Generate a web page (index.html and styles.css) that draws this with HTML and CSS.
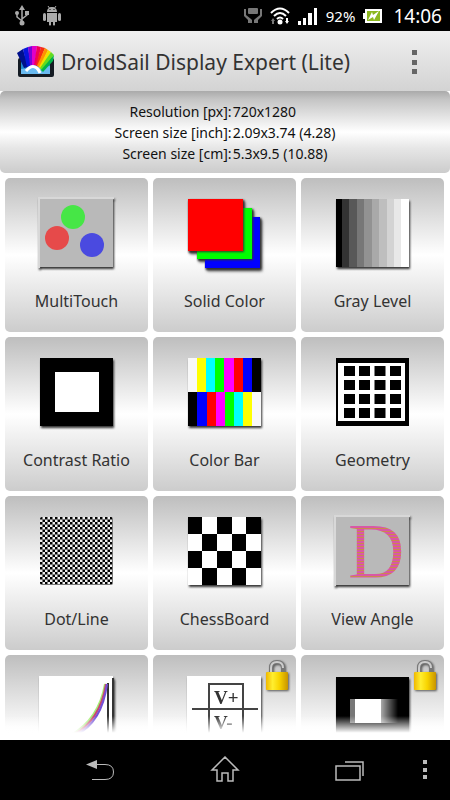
FILE: index.html
```
<!DOCTYPE html>
<html lang="en">
<head>
    <meta charset="UTF-8">
    <meta name="viewport" content="width=device-width, initial-scale=1">
    <title>DroidSail Display Expert (Lite)</title>
    <link rel="stylesheet" href="styles.css">
</head>
<body>
    <div class="status">
        <div class="status-left">
            <svg width="14" height="22" viewBox="0 0 14 22" fill="none" stroke="#aaa" stroke-width="1.5">
                <path d="M7 4V17M2 9V12L7 16M12 8V10L7 14"/>
                <path d="M7 0L10 5H4ZM10 6H14V10H10Z" fill="#aaa" stroke="none"/>
                <circle cx="2" cy="8" r="2" fill="#aaa" stroke="none"/>
                <circle cx="7" cy="18" r="2.5" fill="#aaa" stroke="none"/>
            </svg>
            <svg width="18" height="22" viewBox="0 0 18 22" fill="#aaa">
                <path d="M4 7C4 4 6 2 9 2S14 4 14 7ZM4 8H14V17H12V20Q11 21 10 20V17H8V20Q7 21 6 20V17H4Z"/>
                <rect x="0" y="8" width="3" height="8" rx="1.5"/>
                <rect x="15" y="8" width="3" height="8" rx="1.5"/>
                <path d="M5 1L7 4M13 1L11 4" stroke="#aaa"/>
                <path d="M6.500 4H7.500V5H6.500ZM10.500 4H11.500V5H10.500Z" fill="#000"/>
            </svg>
        </div>
        <div class="status-right">
            <svg width="18" height="18" viewBox="0 0 18 18" fill="#777">
                <rect x="4" y="1" width="10" height="6" rx="1"/>
                <path d="M0 2H2V8L7 12L8 13V16H4V13L0 9ZM18 2H16V8L11 12L10 13V16H14V13L18 9Z"/>
            </svg>
            <svg width="20" height="18" viewBox="0 0 20 18" fill="none" stroke="#fff" stroke-width="2">
                <path d="M1 6Q10 -3 19 6M4 9Q10 3 16 9M7 12Q10 9 13 12"/>
                <circle cx="10" cy="15" r="2.500" fill="#fff" stroke="none"/>
                <path d="M1 14L3 11L5 14H4V17H2V14Z" fill="#777" stroke="none"/>
                <path d="M15 14L17 17L19 14H18V11H16V14Z" fill="#fff" stroke="none"/>
            </svg>
            <svg width="20" height="18" viewBox="0 0 20 18" fill="#fff">
                <path d="M0 14H3V18H0ZM5 11H8V18H5ZM10 6H14V18H10ZM16 1H19V18H16Z"/>
            </svg>
            <span class="percent">92%</span>
            <svg class="battery" width="19" height="14" viewBox="0 0 19 14">
                <path d="M0 4H2V0H19V14H2V10H0Z" fill="#fff"/>
                <path d="M4 2H17V12H4Z" fill="#8cb81e"/>
                <path d="M5 11L9 3L10 6L16 2L11 11L10 8Z" fill="#fff"/>
            </svg>
            <span class="clock">14:06</span>
        </div>
    </div>

    <header class="bar">
        <svg width="38" height="34" viewBox="0 0 38 34">
            <rect x="1" y="13" width="36" height="19" rx="2" fill="#151c24"/>
            <path d="M4 15H33V29H4Z" fill="#2389cf"/>
            <path d="M4 24L33 21V29H4Z" fill="#69baf0"/>
            <path d="M0 8L6 4L11 22L7 23Z" fill="#00108c"/>
            <path d="M6 4L11 2L14 21L10 22Z" fill="#0717dc"/>
            <path d="M11 2L15 1L16 20L13 21Z" fill="#7b00d8"/>
            <path d="M15 1L20 1L18 20L15 20Z" fill="#e000c8"/>
            <path d="M20 1L24 2L20 21L17 20Z" fill="#f00058"/>
            <path d="M24 2L28 3L21 21L19 20Z" fill="#f52f10"/>
            <path d="M28 3L31 5L23 23L20 21Z" fill="#ff9200"/>
            <path d="M31 5L34 7L24 24L22 22Z" fill="#f2df00"/>
            <path d="M34 7L37 10L25 26L23 23Z" fill="#62dc20"/>
            <path d="M37 10L36 16L26 27L24 25Z" fill="#00b54b"/>
            <path d="M9 26Q14 20 18 22Q21 23 23 28" fill="none" stroke="#fff" stroke-width="3"/>
        </svg>
        <h1>DroidSail Display Expert (Lite)</h1>
        <button class="more" aria-label="More options">
            <svg width="6" height="26" viewBox="0 0 6 26" fill="#666"><path d="M0 1H5V6H0ZM0 11H5V16H0ZM0 20H5V25H0Z"/></svg>
        </button>
    </header>

    <dl class="info">
        <dt>Resolution [px]:</dt><dd>720x1280</dd>
        <dt>Screen size [inch]:</dt><dd>2.09x3.74 (4.28)</dd>
        <dt>Screen size [cm]:</dt><dd>5.3x9.5 (10.88)</dd>
    </dl>

    <main class="list">
        <div class="tiles">
            <button class="tile">
                <svg class="icon" viewBox="0 0 75 72">
                    <path d="M0 70V0H75" fill="none" stroke="#d8d8d8" stroke-width="2"/>
                    <rect x="1" y="1" width="73" height="68" fill="#b9b9b9"/>
                    <circle cx="34" cy="19" r="12" fill="#46e646"/>
                    <circle cx="18" cy="40" r="12" fill="#e64a4a"/>
                    <circle cx="53" cy="47" r="12" fill="#4a4ae0"/>
                </svg>
                <span>MultiTouch</span>
            </button>
            <button class="tile">
                <svg class="icon" viewBox="0 0 75 72">
                    <rect class="sheet" x="18" y="19" width="55" height="51" fill="#00f"/>
                    <rect class="sheet" x="10" y="10" width="55" height="51" fill="#0f0"/>
                    <rect class="sheet" x="1" y="1" width="55" height="52" fill="#f00"/>
                </svg>
                <span>Solid Color</span>
            </button>
            <button class="tile">
                <svg class="icon" viewBox="0 0 75 72">
                    <rect x="1" y="1" width="73" height="68" fill="#fff"/>
                    <rect x="1" y="1" width="6" height="68" fill="#000"/>
                    <rect x="7" y="1" width="7" height="68" fill="#333"/>
                    <rect x="14" y="1" width="8" height="68" fill="#585858"/>
                    <rect x="22" y="1" width="7" height="68" fill="#777"/>
                    <rect x="29" y="1" width="8" height="68" fill="#929292"/>
                    <rect x="37" y="1" width="7" height="68" fill="#a9a9a9"/>
                    <rect x="44" y="1" width="8" height="68" fill="#bebebe"/>
                    <rect x="52" y="1" width="7" height="68" fill="#d3d3d3"/>
                    <rect x="59" y="1" width="7" height="68" fill="#e8e8e8"/>
                </svg>
                <span>Gray Level</span>
            </button>

            <button class="tile">
                <svg class="icon" viewBox="0 0 75 72">
                    <rect x="1" y="1" width="73" height="68" fill="#000"/>
                    <rect x="16" y="15" width="44" height="40" fill="#fff"/>
                </svg>
                <span>Contrast Ratio</span>
            </button>
            <button class="tile">
                <svg class="icon" viewBox="0 0 75 72">
                    <rect x="1" y="1" width="73" height="68" fill="#f8f8f8"/>
                    <path d="M10 1H19V35H10ZM56 35H65V69H56Z" fill="#ff0"/>
                    <path d="M19 1H28V35H19ZM47 35H56V69H47Z" fill="#0ff"/>
                    <path d="M28 1H37V35H28ZM38 35H47V69H38Z" fill="#0f0"/>
                    <path d="M37 1H47V35H37ZM29 35H38V69H29Z" fill="#f0f"/>
                    <path d="M47 1H56V35H47ZM20 35H29V69H20Z" fill="#f00"/>
                    <path d="M56 1H65V35H56ZM10 35H20V69H10Z" fill="#00f"/>
                    <path d="M65 1H74V35H65ZM1 35H10V69H1Z" fill="#000"/>
                </svg>
                <span>Color Bar</span>
            </button>
            <button class="tile">
                <svg class="icon flat" viewBox="0 0 75 72">
                    <rect x="1" y="1" width="73" height="68" fill="#000"/>
                    <rect x="5" y="6" width="65" height="58" fill="#fff"/>
                    <path d="M14.500 9V61M29.500 9V61M45 9V61M60.500 9V61" stroke="#000" stroke-width="11"/>
                    <path d="M5 21H70M5 35H70M5 49H70M5 6V64" stroke="#fff" stroke-width="4"/>
                </svg>
                <span>Geometry</span>
            </button>

            <button class="tile">
                <svg class="icon flat" viewBox="0 0 75 72">
                    <defs>
                        <pattern id="dots" x="1" y="1" width="5" height="5" patternUnits="userSpaceOnUse">
                            <rect width="5" height="5" fill="#eee"/>
                            <path d="M0 0H2.500V2.500H0ZM2.500 2.500H5V5H2.500Z" fill="#000"/>
                        </pattern>
                    </defs>
                    <rect x="1" y="1" width="73" height="68" rx="2" fill="url(#dots)"/>
                </svg>
                <span>Dot/Line</span>
            </button>
            <button class="tile">
                <svg class="icon" viewBox="0 0 75 72">
                    <rect x="1" y="1" width="73" height="68" fill="#fff"/>
                    <path d="M1 1H15V18H1ZM30 1H45V18H30ZM59 1H74V18H59ZM15 18H30V35H15ZM45 18H59V35H45ZM1 35H15V52H1ZM30 35H45V52H30ZM59 35H74V52H59ZM15 52H30V69H15ZM45 52H59V69H45Z" fill="#000"/>
                </svg>
                <span>ChessBoard</span>
            </button>
            <button class="tile">
                <svg class="icon" viewBox="0 0 75 72">
                    <defs>
                        <pattern id="stripes" width="4" height="3" patternUnits="userSpaceOnUse">
                            <rect width="4" height="3" fill="#d957a6"/>
                            <rect width="4" height="1" fill="#c98a4c"/>
                        </pattern>
                    </defs>
                    <path d="M0 70V0H75" fill="none" stroke="#d8d8d8" stroke-width="2"/>
                    <rect x="1" y="1" width="73" height="68" fill="#b9b9b9"/>
                    <text class="letter" x="13" y="61" fill="url(#stripes)">D</text>
                </svg>
                <span>View Angle</span>
            </button>

            <button class="tile" aria-label="Gamma">
                <svg class="icon" viewBox="0 0 75 72">
                    <rect x="0" y="1" width="74" height="68" fill="#fff"/>
                    <path d="M69 8V69M74 3V69" stroke="#333" stroke-width="2"/>
                    <g fill="none" stroke-width="2">
                        <path d="M32 60Q60 44 66 9" stroke="#a5ee75"/>
                        <path d="M34 60Q61 46 67 9" stroke="#c94770"/>
                        <path d="M37 60Q63 47 68 9" stroke="#7350d8"/>
                    </g>
                </svg>
            </button>
            <button class="tile" aria-label="Voltage, locked">
                <svg class="icon" viewBox="0 0 75 72">
                    <rect x="0" y="1" width="74" height="68" fill="#fff"/>
                    <path d="M22 70V9H56V70M5 34H71" fill="none" stroke="#444" stroke-width="2"/>
                    <text class="volt" x="27" y="29">V+</text>
                    <text class="volt" x="27" y="54">V-</text>
                </svg>
                <svg class="lock" viewBox="0 0 24 32">
                    <use href="#lock"/>
                </svg>
            </button>
            <button class="tile" aria-label="Response, locked">
                <svg class="icon" viewBox="0 0 75 72">
                    <defs>
                        <linearGradient id="trail">
                            <stop offset="0" stop-color="#aaa"/>
                            <stop offset="1" stop-color="#000"/>
                        </linearGradient>
                    </defs>
                    <rect x="1" y="2" width="73" height="68" fill="#000"/>
                    <rect x="15" y="24" width="5" height="24" fill="#777"/>
                    <rect x="20" y="24" width="26" height="24" fill="#fff"/>
                    <rect x="46" y="24" width="17" height="24" fill="url(#trail)"/>
                </svg>
                <svg class="lock" viewBox="0 0 24 32">
                    <defs>
                        <linearGradient id="gold">
                            <stop offset="0" stop-color="#f0b800"/>
                            <stop offset="0.300" stop-color="#ffee30"/>
                            <stop offset="0.600" stop-color="#f8d400"/>
                            <stop offset="1" stop-color="#c89400"/>
                        </linearGradient>
                        <g id="lock">
                            <path d="M6 14V8Q6 2 12 2T18 8V14" fill="none" stroke="#777" stroke-width="4"/>
                            <path d="M6 14V8Q6 2 12 2T18 8" fill="none" stroke="#ccc" stroke-width="2"/>
                            <rect x="1" y="12" width="22" height="18" rx="1" fill="url(#gold)"/>
                        </g>
                    </defs>
                    <use href="#lock"/>
                </svg>
            </button>
        </div>
    </main>

    <nav class="nav">
        <button aria-label="Back">
            <svg width="30" height="24" viewBox="0 0 30 24" fill="none" stroke="#bbb">
                <path d="M10 6.500H20Q28.500 6.500 28.500 14T20 21.500H7"/>
                <path d="M1 6.500L12 2V11Z" fill="#bbb" stroke="none"/>
            </svg>
        </button>
        <button aria-label="Home">
            <svg width="30" height="28" viewBox="0 0 30 28" fill="none" stroke="#bbb" stroke-width="1.500">
                <path d="M2 14L15 1L28 14H23V25H18V17H12V25H7V14Z"/>
            </svg>
        </button>
        <button aria-label="Recent apps">
            <svg width="30" height="24" viewBox="0 0 30 24" fill="none" stroke="#bbb" stroke-width="1.500">
                <path d="M1 8H25V22H1ZM10 4H28V18"/>
            </svg>
        </button>
        <button aria-label="Menu">
            <svg width="4" height="20" viewBox="0 0 4 20" fill="#bbb"><path d="M0 0H4V4H0ZM0 8H4V12H0ZM0 15H4V19H0Z"/></svg>
        </button>
    </nav>
</body>
</html>
```
FILE: styles.css
```
*{
    box-sizing:border-box;
    padding:0;
    margin:0;
}
body{
    height:100vh;
    display:flex;
    flex-direction:column;
    background:#fff;
    font-family:"Noto Sans",sans-serif;
    color:#333;
}
button{
    background:none;
    border:0;
    outline:none;
    font:inherit;
    color:inherit;
}
svg{
    display:block;
    flex:none;
}
.status{
    height:31px;
    padding:0 8px 0 15px;
    display:flex;
    justify-content:space-between;
    align-items:center;
    background:#000;
    color:#fff;
}
.status-left,.status-right{
    display:flex;
    align-items:center;
}
.status-left{
    gap:14px;
}
.status-right{
    gap:8px;
}
.percent{
    font-size:15px;
}
.battery{
    margin-right:3px;
}
.clock{
    font-size:19px;
}
.bar{
    height:60px;
    padding:1px 20px 0 17px;
    display:flex;
    align-items:center;
    gap:6px;
    background:linear-gradient(#f0f0f0,#d3d3d3);
}
.bar h1{
    flex:1;
    font-size:21px;
    font-weight:400;
    white-space:nowrap;
}
.more{
    width:30px;
    height:48px;
    display:flex;
    justify-content:center;
    align-items:center;
}
.info{
    padding:10px 0 9px;
    display:grid;
    grid-template-columns:auto auto;
    justify-content:center;
    column-gap:1px;
    border-radius:5px;
    background:linear-gradient(#aaa,#c4c4c4 10%,#fff 50%,#e6e6e6 70%,#ccc);
    color:#111;
    font-size:14px;
    line-height:21px;
}
.info dt{
    text-align:right;
}
.list{
    flex:1;
    min-height:0;
    padding:5px 6px 0 5px;
    position:relative;
    overflow:hidden;
}
.list::after{
    content:"";
    position:absolute;
    left:0;
    right:0;
    bottom:0;
    height:24px;
    background:linear-gradient(transparent,#fff 70%);
}
.tiles{
    display:grid;
    grid-template-columns:repeat(3,1fr);
    gap:5px;
}
.tile{
    height:154px;
    padding-top:20px;
    display:flex;
    flex-direction:column;
    align-items:center;
    gap:19px;
    position:relative;
    border-radius:5px;
    background:linear-gradient(#bebebe,#fff 50%,#e6e6e6 75%,#ccc);
    font-size:16px;
    line-height:24px;
    white-space:nowrap;
}
.icon{
    width:75px;
    height:72px;
    overflow:visible;
    filter:drop-shadow(1px 2px 1px #333);
}
.flat{
    filter:none;
}
.sheet{
    filter:drop-shadow(1px 1px 1px #333);
}
.letter{
    font:78px "Liberation Serif",serif;
}
.volt{
    font:bold 19px "Liberation Serif",serif;
    fill:#333;
}
.lock{
    width:24px;
    height:32px;
    position:absolute;
    top:5px;
    right:7px;
    filter:drop-shadow(1px 1px 1px #555);
}
.nav{
    height:60px;
    padding:0 12px 0 38px;
    display:grid;
    grid-template-columns:repeat(3,1fr) 26px;
    background:#000;
}
.nav button{
    display:flex;
    justify-content:center;
    align-items:center;
}
```
